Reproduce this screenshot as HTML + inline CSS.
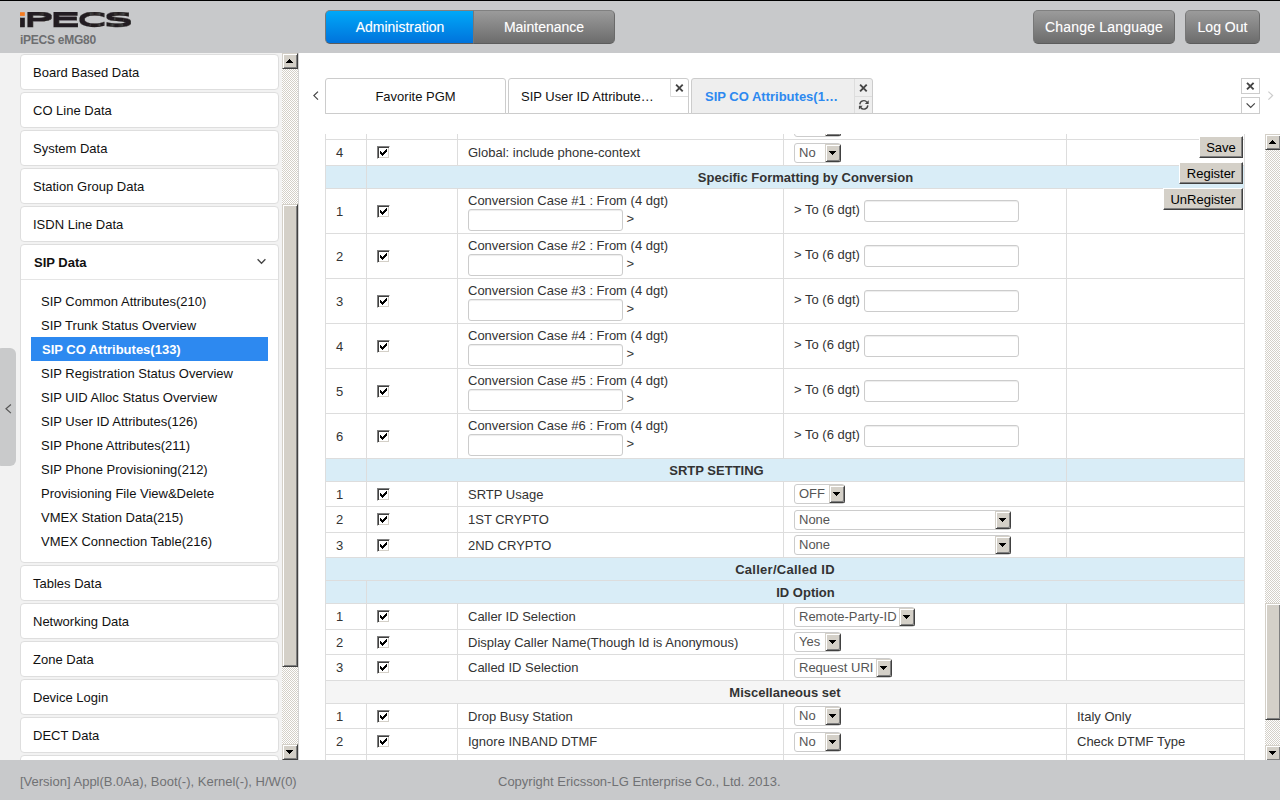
<!DOCTYPE html>
<html lang="en">
<head>
<meta charset="utf-8">
<title>iPECS eMG80</title>
<style>
*{box-sizing:border-box;margin:0;padding:0}
html,body{width:1280px;height:800px;overflow:hidden;background:#fff}
body{font-family:"Liberation Sans",Arial,sans-serif;font-size:13px;color:#333;position:relative}
.abs{position:absolute}
/* header */
#hdr{position:absolute;left:0;top:0;width:1280px;height:53px;background:#c8c9cb;border-top:1px solid #000}
#logo{position:absolute;left:20px;top:11px;width:112px;height:17px}
#sub{position:absolute;left:20px;top:32px;letter-spacing:-0.25px;font-size:12px;font-weight:bold;color:#6d6e70;line-height:14px;white-space:nowrap}
.tbtn{position:absolute;top:9px;height:34px;line-height:32px;text-align:center;color:#fff;font-size:14px;border:1px solid;border-color:#808080 #6a6a6a #5c5c5c #777;white-space:nowrap;text-shadow:0 0 1px rgba(255,255,255,.35)}
.gray{background:linear-gradient(#9b9b9b,#6c6c6c)}
.blue{background:linear-gradient(#00a8f8,#0073dc)}
/* footer */
#ftr{position:absolute;left:0;top:760px;width:1280px;height:40px;background:#c8c9cb;color:#707174;font-size:13px;line-height:15px}
/* sidebar */
#side{position:absolute;left:0;top:53px;width:299px;height:707px;background:#f2f2f2;overflow:hidden}
.card{position:absolute;left:20px;width:259px;height:36px;background:#fff;border:1px solid #dedede;border-radius:4px}
.card span{position:absolute;left:12px;top:10px;line-height:16px;color:#111;white-space:nowrap}
.sub{position:absolute;left:41px;margin-top:1px;line-height:16px;color:#111;white-space:nowrap}
/* classic scrollbars */
.track{position:absolute;background-color:#fff;background-image:conic-gradient(#d4d0c8 25%,#fff 0 50%,#d4d0c8 0 75%,#fff 0);background-size:2px 2px}
.sbtn{position:absolute;width:16px;height:16px;background:#d4d0c8;border:1px solid;border-color:#d4d0c8 #404040 #404040 #d4d0c8;box-shadow:inset 1px 1px 0 #fff,inset -1px -1px 0 #808080}
.thumb{position:absolute;width:16px;background:#d4d0c8;border:1px solid;border-color:#d4d0c8 #404040 #404040 #d4d0c8;box-shadow:inset 1px 1px 0 #fff,inset -1px -1px 0 #808080}
.tri{position:absolute;left:3px;width:7px;height:4px;background-repeat:no-repeat}
.tri.up{top:5px;background-image:linear-gradient(#000,#000),linear-gradient(#000,#000),linear-gradient(#000,#000),linear-gradient(#000,#000);background-position:3px 0,2px 1px,1px 2px,0 3px;background-size:1px 1px,3px 1px,5px 1px,7px 1px}
.tri.dn{top:5px;background-image:linear-gradient(#000,#000),linear-gradient(#000,#000),linear-gradient(#000,#000),linear-gradient(#000,#000);background-position:0 0,1px 1px,2px 2px,3px 3px;background-size:7px 1px,5px 1px,3px 1px,1px 1px}

/* main */
.tab{position:absolute;top:78px;height:36px;line-height:36px;border:1px solid #ccc;border-radius:3px 3px 0 0;background:#fff;color:#111;font-size:13px;white-space:nowrap;overflow:hidden}
.tab.act{background:#eee;color:#2d89f0;font-weight:bold}
.tabx{position:absolute}
#pane{position:absolute;left:299px;top:134px;width:966px;height:626px;overflow:hidden}
#tb{position:absolute;left:26px;top:-21px;width:920px;table-layout:fixed;border-collapse:separate;border-spacing:0;border-left:1px solid #ddd;border-top:1px solid #ddd}
#tb td{border-right:1px solid #ddd;border-bottom:1px solid #ddd;padding:0 0 0 10px;vertical-align:middle;line-height:15px;white-space:nowrap;color:#333}
#tb tr.info td{background:#d9edf7}
#tb tr.misc td{background:#f5f5f5}
#tb td.c{text-align:center;font-weight:bold;padding:0}
.cb{display:inline-block;width:13px;height:13px;background:#fff;border:1px solid;border-color:#808080 #fff #fff #808080;box-shadow:inset 1px 1px 0 #404040,inset -1px -1px 0 #d4d0c8;position:relative;top:-1px;vertical-align:middle}
.cb svg{position:absolute;left:2px;top:2px}
.sel{display:inline-block;position:relative;height:20px;line-height:18px;border:1px solid #ccc;border-radius:3px;background:#fff;color:#555;padding-left:4px;vertical-align:middle;font-size:13px}
.sel b{position:absolute;right:-1px;top:0;border-radius:0 2px 2px 0;width:16px;height:18px;background:#d4d0c8;border:1px solid;border-color:#d4d0c8 #404040 #404040 #d4d0c8;box-shadow:inset 1px 1px 0 #fff,inset -1px -1px 0 #808080}
.sel b .tri{left:3px;top:6px}
.inp{display:inline-block;height:22px;border:1px solid #ccc;border-radius:3px;background:#fff;vertical-align:middle;box-shadow:inset 0 1px 1px rgba(0,0,0,.075)}
.l2{position:relative;top:1px}
.wbtn{position:absolute;height:22px;line-height:21px;text-align:center;color:#000;font-size:13px;background:#d4d0c8;border:1px solid;border-color:#fff #404040 #404040 #fff;box-shadow:inset -1px -1px 0 #808080}
</style>
</head>
<body>
<div id="hdr">
  <svg id="logo" viewBox="0 0 112 17">
    <defs><clipPath id="istem"><rect x="-1" y="6.7" width="7" height="12"/></clipPath>
    <filter id="fat" x="-5%" y="-20%" width="110%" height="140%"><feMorphology operator="dilate" radius="0 1"/></filter></defs>
    <rect x="0" y="0.2" width="4.8" height="3.7" fill="#f47b20"/>
    <g filter="url(#fat)" font-family="DejaVu Sans, Liberation Sans, sans-serif" fill="#231f20" stroke="#231f20" stroke-width="0.3" stroke-linejoin="miter"><g clip-path="url(#istem)"><text x="-1.30" y="14.35" transform="scale(2.861 1)" font-size="15.34">i</text></g><g><text x="1.08" y="14.35" transform="scale(2.795 1)" font-size="17.83">P</text></g><g><text x="10.26" y="14.35" transform="scale(2.824 1)" font-size="17.83">E</text></g><g><text x="24.81" y="14.35" transform="scale(2.318 1)" font-size="17.83">C</text></g><g><text x="32.34" y="14.35" transform="scale(2.592 1)" font-size="17.83">S</text></g></g>
  </svg>
  <div id="sub">iPECS eMG80</div>
  <div class="tbtn blue" style="left:325px;width:149px;border-radius:5px 0 0 5px;border-right:0">Administration</div>
  <div class="tbtn gray" style="left:473px;width:142px;border-radius:0 5px 5px 0">Maintenance</div>
  <div class="tbtn gray" style="left:1033px;width:142px;border-radius:5px;letter-spacing:0.2px">Change Language</div>
  <div class="tbtn gray" style="left:1185px;width:75px;border-radius:5px">Log Out</div>
</div>

<div id="side">
<div class="card" style="top:1px"><span>Board Based Data</span></div>
<div class="card" style="top:39px"><span>CO Line Data</span></div>
<div class="card" style="top:77px"><span>System Data</span></div>
<div class="card" style="top:115px"><span>Station Group Data</span></div>
<div class="card" style="top:153px"><span>ISDN Line Data</span></div>
<div class="card" style="top:191px;height:319px"><span style="font-weight:bold;left:13px">SIP Data</span><svg class="abs" style="left:235px;top:12px" width="12" height="8" viewBox="0 0 12 8"><path d="M1.6 2.3 L5.5 6.3 L9.4 2.3" fill="none" stroke="#444" stroke-width="1.3"/></svg><div class="abs" style="left:0;top:34px;width:257px;height:1px;background:#e5e5e5"></div></div>
<div class="sub" style="top:240px">SIP Common Attributes(210)</div>
<div class="sub" style="top:264px">SIP Trunk Status Overview</div>
<div class="abs" style="left:31px;top:284px;width:237px;height:24px;background:#2d89f0"></div>
<div class="sub" style="top:288px;left:42px;color:#fff;font-weight:bold">SIP CO Attributes(133)</div>
<div class="sub" style="top:312px">SIP Registration Status Overview</div>
<div class="sub" style="top:336px">SIP UID Alloc Status Overview</div>
<div class="sub" style="top:360px">SIP User ID Attributes(126)</div>
<div class="sub" style="top:384px">SIP Phone Attributes(211)</div>
<div class="sub" style="top:408px">SIP Phone Provisioning(212)</div>
<div class="sub" style="top:432px">Provisioning File View&amp;Delete</div>
<div class="sub" style="top:456px">VMEX Station Data(215)</div>
<div class="sub" style="top:480px">VMEX Connection Table(216)</div>
<div class="card" style="top:512px"><span>Tables Data</span></div>
<div class="card" style="top:550px"><span>Networking Data</span></div>
<div class="card" style="top:588px"><span>Zone Data</span></div>
<div class="card" style="top:626px"><span>Device Login</span></div>
<div class="card" style="top:664px"><span>DECT Data</span></div>
<div class="card" style="top:702px"><span></span></div>
<div class="track" style="left:282px;top:0;width:16px;height:707px"></div><div class="abs" style="left:298px;top:0;width:1px;height:707px;background:#d2d2d2"></div>
<div class="sbtn" style="left:282px;top:0"><i class="tri up"></i></div>
<div class="sbtn" style="left:282px;top:691px"><i class="tri dn"></i></div>
<div class="thumb" style="left:282px;top:151px;height:463px"></div>
<div class="abs" style="left:-4px;top:295px;width:20px;height:118px;background:#c9cacb;border-radius:6px"></div>
<svg class="abs" style="left:4px;top:349px" width="10" height="14" viewBox="0 0 10 14"><path d="M6.9 2.5 L2.0 6.8 L6.9 11.1" fill="none" stroke="#555" stroke-width="1.2"/></svg>
</div>

<div id="main">
<svg class="abs" style="left:310px;top:88px" width="12" height="16" viewBox="0 0 12 16"><path d="M8.0 3.6 L3.9 7.6 L8.0 11.6" fill="none" stroke="#444" stroke-width="1.2"/></svg>
<div class="abs" style="left:325px;top:113px;width:917px;height:1px;background:#ccc"></div>
<div class="tab" style="left:325px;width:181px;text-align:center">Favorite PGM</div>
<div class="tab" style="left:508px;width:181px;padding-left:12px">SIP User ID Attribute&hellip;
  <svg class="abs" style="left:161px;top:0" width="18" height="18" viewBox="0 0 18 18"><path d="M0.5 0 V17.5 H18" fill="none" stroke="#ddd"/><path d="M6.10 5.70 L12.70 12.30 M12.70 5.70 L6.10 12.30" stroke="#444" stroke-width="1.9" fill="none"/></svg>
</div>
<div class="tab act" style="left:691px;width:182px;padding-left:13px">SIP CO Attributes(1&hellip;
  <svg class="abs" style="left:162px;top:0" width="18" height="34" viewBox="0 0 18 34"><path d="M0.5 0 V34 M1 17.5 H18" fill="none" stroke="#ddd"/><path d="M6.10 5.70 L12.70 12.30 M12.70 5.70 L6.10 12.30" stroke="#444" stroke-width="1.9" fill="none"/><path d="M5.80 25.40 A4.0 4.0 0 0 1 13.00 23.30 M13.80 26.40 A4.0 4.0 0 0 1 6.60 28.50" fill="none" stroke="#444" stroke-width="1.4"/><path d="M14.70 21.30 L14.70 25.10 L10.90 25.10 Z M4.90 30.50 L4.90 26.70 L8.70 26.70 Z" fill="#444"/></svg>
</div>
<svg class="abs" style="left:1241px;top:78px" width="19" height="36" viewBox="0 0 19 36"><rect x="0.5" y="0.5" width="18" height="15" fill="#fff" stroke="#ccc"/><rect x="0.5" y="19.5" width="18" height="16" fill="#fff" stroke="#ccc"/><path d="M6.00 4.80 L12.60 11.40 M12.60 4.80 L6.00 11.40" stroke="#444" stroke-width="1.9" fill="none"/><path d="M5.6 25.4 L9.7 29.5 L13.8 25.4" fill="none" stroke="#444" stroke-width="1.2"/></svg>
<svg class="abs" style="left:1264px;top:88px" width="12" height="16" viewBox="0 0 12 16"><path d="M4.4 3.6 L8.6 7.6 L4.4 11.6" fill="none" stroke="#ccc" stroke-width="1.2"/></svg>

<div id="pane"><table id="tb" cellspacing="0"><colgroup><col style="width:41px"><col style="width:91px"><col style="width:326px"><col style="width:283px"><col style="width:178px"></colgroup><tr style="height:26px"><td>3</td><td><i class="cb"><svg width="7" height="7" viewBox="0 0 7 7"><path shape-rendering="crispEdges" d="M0 2h1v1h1v1h1v-1h1v-1h1v-1h1v-1h1v3h-1v1h-1v1h-1v1h-1v1h-1v-1h-1v-1h-1z" fill="#000"/></svg></i></td><td>Global: prefix</td><td><span class="sel" style="width:47px">No<b><i class="tri dn"></i></b></span></td><td></td></tr>
<tr style="height:26px"><td>4</td><td><i class="cb"><svg width="7" height="7" viewBox="0 0 7 7"><path shape-rendering="crispEdges" d="M0 2h1v1h1v1h1v-1h1v-1h1v-1h1v-1h1v3h-1v1h-1v1h-1v1h-1v1h-1v-1h-1v-1h-1z" fill="#000"/></svg></i></td><td>Global: include phone-context</td><td><span class="sel" style="width:47px">No<b><i class="tri dn"></i></b></span></td><td></td></tr>
<tr class="info" style="height:23px"><td></td><td colspan="4" class="c">Specific Formatting by Conversion</td></tr>
<tr style="height:45px"><td>1</td><td><i class="cb"><svg width="7" height="7" viewBox="0 0 7 7"><path shape-rendering="crispEdges" d="M0 2h1v1h1v1h1v-1h1v-1h1v-1h1v-1h1v3h-1v1h-1v1h-1v1h-1v1h-1v-1h-1v-1h-1z" fill="#000"/></svg></i></td><td>Conversion Case #1 : From (4 dgt)<br><span class="l2"><span class="inp" style="width:155px"></span> &gt;</span></td><td>&gt; To (6 dgt) <span class="inp" style="width:155px"></span></td><td></td></tr>
<tr style="height:45px"><td>2</td><td><i class="cb"><svg width="7" height="7" viewBox="0 0 7 7"><path shape-rendering="crispEdges" d="M0 2h1v1h1v1h1v-1h1v-1h1v-1h1v-1h1v3h-1v1h-1v1h-1v1h-1v1h-1v-1h-1v-1h-1z" fill="#000"/></svg></i></td><td>Conversion Case #2 : From (4 dgt)<br><span class="l2"><span class="inp" style="width:155px"></span> &gt;</span></td><td>&gt; To (6 dgt) <span class="inp" style="width:155px"></span></td><td></td></tr>
<tr style="height:45px"><td>3</td><td><i class="cb"><svg width="7" height="7" viewBox="0 0 7 7"><path shape-rendering="crispEdges" d="M0 2h1v1h1v1h1v-1h1v-1h1v-1h1v-1h1v3h-1v1h-1v1h-1v1h-1v1h-1v-1h-1v-1h-1z" fill="#000"/></svg></i></td><td>Conversion Case #3 : From (4 dgt)<br><span class="l2"><span class="inp" style="width:155px"></span> &gt;</span></td><td>&gt; To (6 dgt) <span class="inp" style="width:155px"></span></td><td></td></tr>
<tr style="height:45px"><td>4</td><td><i class="cb"><svg width="7" height="7" viewBox="0 0 7 7"><path shape-rendering="crispEdges" d="M0 2h1v1h1v1h1v-1h1v-1h1v-1h1v-1h1v3h-1v1h-1v1h-1v1h-1v1h-1v-1h-1v-1h-1z" fill="#000"/></svg></i></td><td>Conversion Case #4 : From (4 dgt)<br><span class="l2"><span class="inp" style="width:155px"></span> &gt;</span></td><td>&gt; To (6 dgt) <span class="inp" style="width:155px"></span></td><td></td></tr>
<tr style="height:45px"><td>5</td><td><i class="cb"><svg width="7" height="7" viewBox="0 0 7 7"><path shape-rendering="crispEdges" d="M0 2h1v1h1v1h1v-1h1v-1h1v-1h1v-1h1v3h-1v1h-1v1h-1v1h-1v1h-1v-1h-1v-1h-1z" fill="#000"/></svg></i></td><td>Conversion Case #5 : From (4 dgt)<br><span class="l2"><span class="inp" style="width:155px"></span> &gt;</span></td><td>&gt; To (6 dgt) <span class="inp" style="width:155px"></span></td><td></td></tr>
<tr style="height:45px"><td>6</td><td><i class="cb"><svg width="7" height="7" viewBox="0 0 7 7"><path shape-rendering="crispEdges" d="M0 2h1v1h1v1h1v-1h1v-1h1v-1h1v-1h1v3h-1v1h-1v1h-1v1h-1v1h-1v-1h-1v-1h-1z" fill="#000"/></svg></i></td><td>Conversion Case #6 : From (4 dgt)<br><span class="l2"><span class="inp" style="width:155px"></span> &gt;</span></td><td>&gt; To (6 dgt) <span class="inp" style="width:155px"></span></td><td></td></tr>
<tr class="info" style="height:23px"><td></td><td colspan="3" class="c">SRTP SETTING</td><td></td></tr>
<tr style="height:25px"><td>1</td><td><i class="cb"><svg width="7" height="7" viewBox="0 0 7 7"><path shape-rendering="crispEdges" d="M0 2h1v1h1v1h1v-1h1v-1h1v-1h1v-1h1v3h-1v1h-1v1h-1v1h-1v1h-1v-1h-1v-1h-1z" fill="#000"/></svg></i></td><td>SRTP Usage</td><td><span class="sel" style="width:51px">OFF<b><i class="tri dn"></i></b></span></td><td></td></tr>
<tr style="height:26px"><td>2</td><td><i class="cb"><svg width="7" height="7" viewBox="0 0 7 7"><path shape-rendering="crispEdges" d="M0 2h1v1h1v1h1v-1h1v-1h1v-1h1v-1h1v3h-1v1h-1v1h-1v1h-1v1h-1v-1h-1v-1h-1z" fill="#000"/></svg></i></td><td>1ST CRYPTO</td><td><span class="sel" style="width:217px">None<b><i class="tri dn"></i></b></span></td><td></td></tr>
<tr style="height:25px"><td>3</td><td><i class="cb"><svg width="7" height="7" viewBox="0 0 7 7"><path shape-rendering="crispEdges" d="M0 2h1v1h1v1h1v-1h1v-1h1v-1h1v-1h1v3h-1v1h-1v1h-1v1h-1v1h-1v-1h-1v-1h-1z" fill="#000"/></svg></i></td><td>2ND CRYPTO</td><td><span class="sel" style="width:217px">None<b><i class="tri dn"></i></b></span></td><td></td></tr>
<tr class="info" style="height:23px"><td colspan="5" class="c"><span style="letter-spacing:0.27px">Caller/Called ID</span></td></tr>
<tr class="info" style="height:23px"><td></td><td colspan="4" class="c">ID Option</td></tr>
<tr style="height:26px"><td>1</td><td><i class="cb"><svg width="7" height="7" viewBox="0 0 7 7"><path shape-rendering="crispEdges" d="M0 2h1v1h1v1h1v-1h1v-1h1v-1h1v-1h1v3h-1v1h-1v1h-1v1h-1v1h-1v-1h-1v-1h-1z" fill="#000"/></svg></i></td><td>Caller ID Selection</td><td><span class="sel" style="width:121px">Remote-Party-ID<b><i class="tri dn"></i></b></span></td><td></td></tr>
<tr style="height:25px"><td>2</td><td><i class="cb"><svg width="7" height="7" viewBox="0 0 7 7"><path shape-rendering="crispEdges" d="M0 2h1v1h1v1h1v-1h1v-1h1v-1h1v-1h1v3h-1v1h-1v1h-1v1h-1v1h-1v-1h-1v-1h-1z" fill="#000"/></svg></i></td><td>Display Caller Name(Though Id is Anonymous)</td><td><span class="sel" style="width:47px">Yes<b><i class="tri dn"></i></b></span></td><td></td></tr>
<tr style="height:26px"><td>3</td><td><i class="cb"><svg width="7" height="7" viewBox="0 0 7 7"><path shape-rendering="crispEdges" d="M0 2h1v1h1v1h1v-1h1v-1h1v-1h1v-1h1v3h-1v1h-1v1h-1v1h-1v1h-1v-1h-1v-1h-1z" fill="#000"/></svg></i></td><td>Called ID Selection</td><td><span class="sel" style="width:98px">Request URI<b><i class="tri dn"></i></b></span></td><td></td></tr>
<tr class="misc" style="height:23px"><td colspan="5" class="c">Miscellaneous set</td></tr>
<tr style="height:25px"><td>1</td><td><i class="cb"><svg width="7" height="7" viewBox="0 0 7 7"><path shape-rendering="crispEdges" d="M0 2h1v1h1v1h1v-1h1v-1h1v-1h1v-1h1v3h-1v1h-1v1h-1v1h-1v1h-1v-1h-1v-1h-1z" fill="#000"/></svg></i></td><td>Drop Busy Station</td><td><span class="sel" style="width:47px">No<b><i class="tri dn"></i></b></span></td><td>Italy Only</td></tr>
<tr style="height:26px"><td>2</td><td><i class="cb"><svg width="7" height="7" viewBox="0 0 7 7"><path shape-rendering="crispEdges" d="M0 2h1v1h1v1h1v-1h1v-1h1v-1h1v-1h1v3h-1v1h-1v1h-1v1h-1v1h-1v-1h-1v-1h-1z" fill="#000"/></svg></i></td><td>Ignore INBAND DTMF</td><td><span class="sel" style="width:47px">No<b><i class="tri dn"></i></b></span></td><td>Check DTMF Type</td></tr>
<tr style="height:26px"><td></td><td></td><td></td><td></td><td></td></tr></table></div>
<div class="wbtn" style="left:1199px;top:136px;width:44px">Save</div>
<div class="wbtn" style="left:1179px;top:162px;width:64px">Register</div>
<div class="wbtn" style="left:1163px;top:188px;width:80px">UnRegister</div>
<div class="track" style="left:1265px;top:134px;width:16px;height:626px"></div>
<div class="sbtn" style="left:1265px;top:134px"><i class="tri up"></i></div>
<div class="sbtn" style="left:1265px;top:745px"><i class="tri dn"></i></div>
<div class="thumb" style="left:1265px;top:603px;height:117px"></div>
</div>

<div id="ftr">
  <div class="abs" style="left:20px;top:14px;white-space:nowrap">[Version] Appl(B.0Aa), Boot(-), Kernel(-), H/W(0)</div>
  <div class="abs" style="left:498px;top:14px;white-space:nowrap">Copyright Ericsson-LG Enterprise Co., Ltd. 2013.</div>
</div>
</body>
</html>
